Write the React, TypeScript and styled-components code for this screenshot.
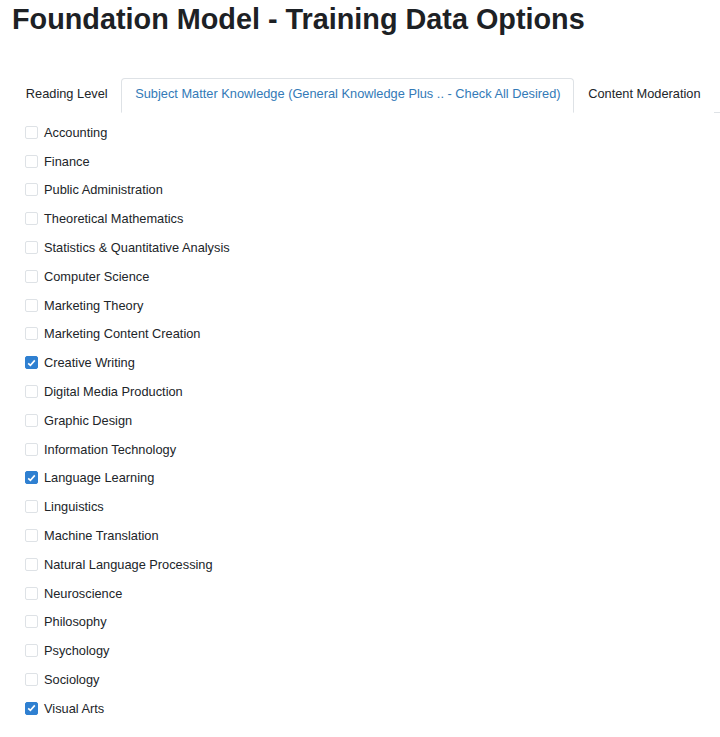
import React, { useState } from "react";
import styled, { createGlobalStyle } from "styled-components";

const Global = createGlobalStyle`
  html, body { margin: 0; padding: 0; background: #fff; }
  body { font-family: "Liberation Sans", Arial, sans-serif; color: #212529; }
`;

const Page = styled.div`
  padding: 0 0 0 12px;
`;

const Title = styled.h1`
  margin: 0;
  padding-top: 2px;
  font-size: 28.8px;
  line-height: 34px;
  font-weight: 700;
  color: #1d2125;
  letter-spacing: 0;
`;

const Tabs = styled.div`
  display: flex;
  margin-top: 42px;
  border-bottom: 1px solid #dee2e6;
  white-space: nowrap;
`;

const Tab = styled.div<{ $active?: boolean }>`
  padding: 0 12.8px;
  height: 33px;
  line-height: 29px;
  font-size: 12.8px;
  margin-bottom: -1px;
  border: 1px solid ${(p) => (p.$active ? "#dee2e6" : "transparent")};
  border-bottom-color: ${(p) => (p.$active ? "#fff" : "transparent")};
  border-radius: 4px 4px 0 0;
  color: ${(p) => (p.$active ? "#337ab7" : "#212529")};
  background: #fff;
`;

const List = styled.div`
  display: flex;
  flex-direction: column;
  padding: 5px 0 0 13px;
`;

const Row = styled.label`
  display: flex;
  align-items: center;
  gap: 6px;
  height: 28.8px;
  font-size: 12.8px;
  color: #212529;
  cursor: pointer;
`;

const Box = styled.span<{ $checked: boolean }>`
  box-sizing: border-box;
  width: 13px;
  height: 13px;
  border-radius: 2px;
  border: 1px solid ${(p) => (p.$checked ? "#2f80d1" : "#dee2e6")};
  background: ${(p) => (p.$checked ? "#2f80d1" : "#fff")};
  display: flex;
  align-items: center;
  justify-content: center;
  flex-shrink: 0;
`;

const items: [string, boolean][] = [
  ["Accounting", false],
  ["Finance", false],
  ["Public Administration", false],
  ["Theoretical Mathematics", false],
  ["Statistics & Quantitative Analysis", false],
  ["Computer Science", false],
  ["Marketing Theory", false],
  ["Marketing Content Creation", false],
  ["Creative Writing", true],
  ["Digital Media Production", false],
  ["Graphic Design", false],
  ["Information Technology", false],
  ["Language Learning", true],
  ["Linguistics", false],
  ["Machine Translation", false],
  ["Natural Language Processing", false],
  ["Neuroscience", false],
  ["Philosophy", false],
  ["Psychology", false],
  ["Sociology", false],
  ["Visual Arts", true],
];

export default function App() {
  const [state, setState] = useState(items.map((i) => i[1]));
  return (
    <Page>
      <Global />
      <Title>Foundation Model - Training Data Options</Title>
      <Tabs>
        <Tab>Reading Level</Tab>
        <Tab $active>Subject Matter Knowledge (General Knowledge Plus .. - Check All Desired)</Tab>
        <Tab>Content Moderation</Tab>
      </Tabs>
      <List>
        {items.map(([name], i) => (
          <Row key={name} onClick={() => setState((s) => s.map((v, j) => (j === i ? !v : v)))}>
            <Box $checked={state[i]}>
              {state[i] && (
                <svg width="9" height="8" viewBox="0 0 9 8">
                  <path d="M1.2 4.3 L3.4 6.4 L7.8 1.4" fill="none" stroke="#fff" strokeWidth="1.6" />
                </svg>
              )}
            </Box>
            {name}
          </Row>
        ))}
      </List>
    </Page>
  );
}
